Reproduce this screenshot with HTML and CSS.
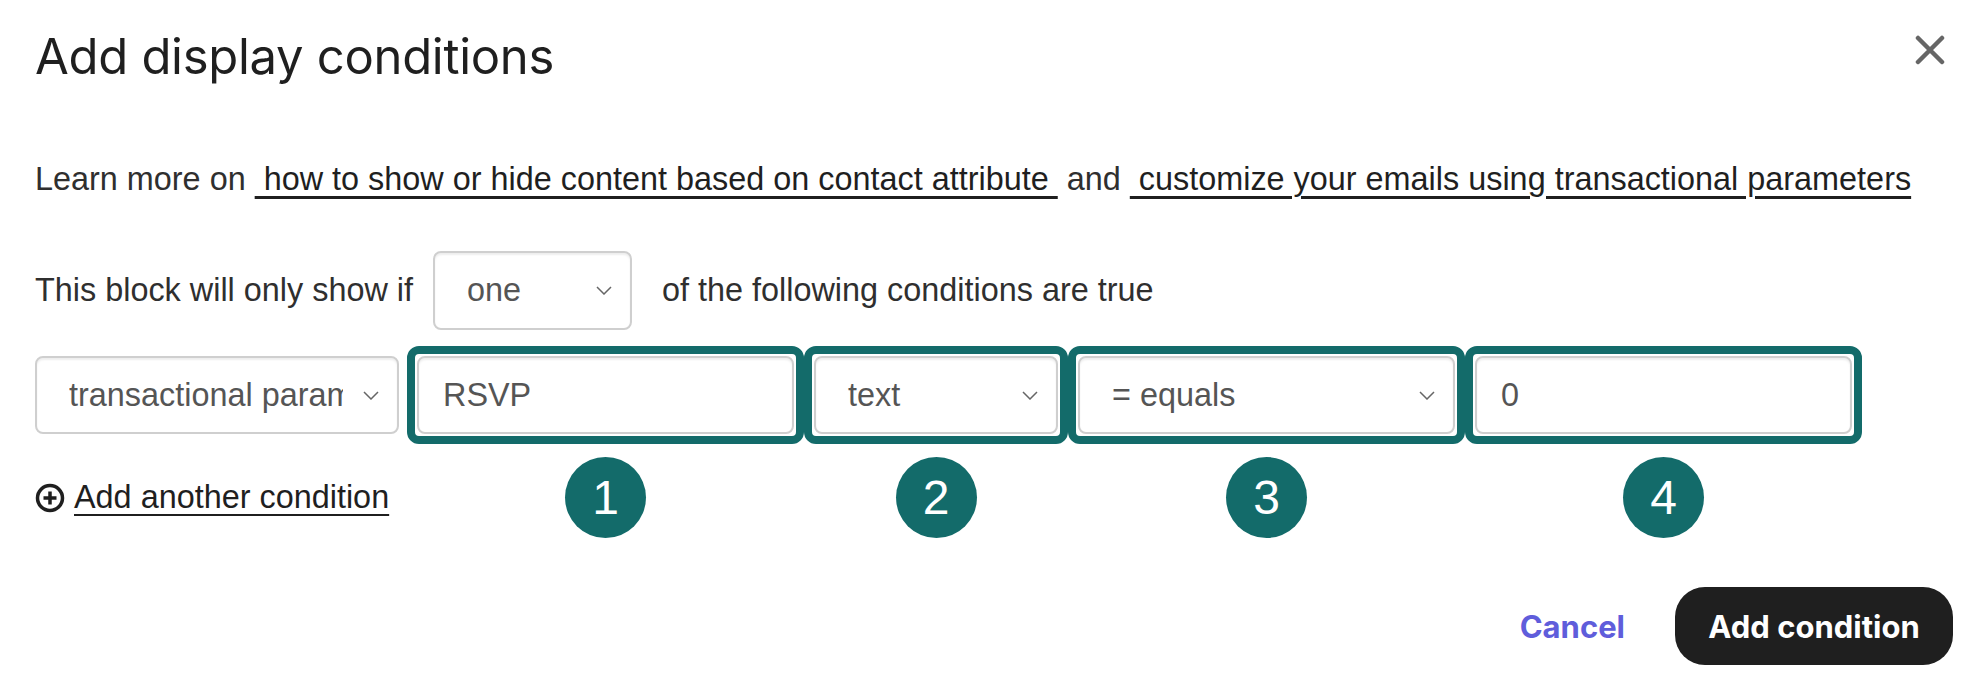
FILE: index.html
```html
<!DOCTYPE html>
<html lang="en">
<head>
<meta charset="utf-8">
<title>Add display conditions</title>
<link rel="stylesheet" href="styles.css">
</head>
<body>
<div class="dialog">
  <header class="head">
    <h1 class="title">Add display conditions</h1>
    <button class="close" aria-label="Close">
      <svg viewBox="0 0 30 30" width="30" height="30"><path d="M3 3L27 27M27 3L3 27" stroke="#666" stroke-width="4.5" stroke-linecap="round" fill="none"/></svg>
    </button>
  </header>

  <p class="learn">Learn more on <a class="link">&nbsp;how to show or hide content based on contact attribute&nbsp;</a> and <a class="link">&nbsp;customize your emails using transactional parameters</a></p>

  <div class="match">
    <span>This block will only show if</span>
    <div class="field select one"><span class="val">one</span><svg class="chev" viewBox="0 0 16 9" width="16" height="9"><polyline points="1,1 8,8 15,1" fill="none" stroke="#666" stroke-width="1.5"/></svg></div>
    <span>of the following conditions are true</span>
  </div>

  <div class="cond">
    <div class="field select attr"><span class="val clip">transactional parameter</span><svg class="chev" viewBox="0 0 16 9" width="16" height="9"><polyline points="1,1 8,8 15,1" fill="none" stroke="#666" stroke-width="1.5"/></svg></div>
    <div class="mark"><div class="field input">RSVP</div></div>
    <div class="mark"><div class="field select"><span class="val">text</span><svg class="chev" viewBox="0 0 16 9" width="16" height="9"><polyline points="1,1 8,8 15,1" fill="none" stroke="#666" stroke-width="1.5"/></svg></div></div>
    <div class="mark"><div class="field select"><span class="val">= equals</span><svg class="chev" viewBox="0 0 16 9" width="16" height="9"><polyline points="1,1 8,8 15,1" fill="none" stroke="#666" stroke-width="1.5"/></svg></div></div>
    <div class="mark"><div class="field input">0</div></div>

    <a class="add">
      <svg viewBox="0 0 30 30" width="30" height="30"><circle cx="15" cy="15" r="12.5" fill="none" stroke="#1f1f1f" stroke-width="3.5"/><path d="M15 8.5V21.5M8.5 15H21.5" stroke="#1f1f1f" stroke-width="3.5"/></svg>
      <span class="add-text">Add another condition</span>
    </a>
    <span class="badge">1</span>
    <span class="badge">2</span>
    <span class="badge">3</span>
    <span class="badge">4</span>
  </div>

  <footer class="foot">
    <a class="cancel">Cancel</a>
    <button class="primary">Add condition</button>
  </footer>
</div>
</body>
</html>
```

FILE: styles.css
```css
html, body {
  margin: 0;
  padding: 0;
  background: #fff;
}

body {
  font-family: "Liberation Sans", Arial, sans-serif;
  font-size: 32.4px;
  color: #2f2f2f;
}

.dialog {
  width: 1980px;
  height: 690px;
  box-sizing: border-box;
  padding: 0 27px 0 35px;
}

.head {
  height: 112px;
  display: flex;
  align-items: center;
  justify-content: space-between;
}

.title {
  margin: 0;
  font-family: Inter, "Liberation Sans", sans-serif;
  font-weight: 400;
  font-size: 49px;
  color: #1f1f1f;
  letter-spacing: -0.3px;
}

.close {
  border: 0;
  background: none;
  padding: 0;
  margin: 0 8px 12px 0;
  width: 30px;
  height: 30px;
  display: flex;
}

.learn {
  margin: 43px 0 0;
  line-height: 48px;
}

.link {
  color: #1f1f1f;
  text-decoration: underline;
  text-decoration-thickness: 3px;
  text-underline-offset: 6px;
}

.match {
  margin-top: 48px;
  display: flex;
  align-items: center;
  gap: 20px;
}

.field {
  box-sizing: border-box;
  height: 78px;
  border: 2px solid #cfcfcf;
  border-radius: 8px;
  background: #fff;
  box-shadow: inset 0 2px 2px rgba(0, 0, 0, 0.07);
  display: flex;
  align-items: center;
  color: #555;
  font-size: 32.4px;
}

.select {
  padding: 0 18px 0 32px;
  justify-content: space-between;
}

.input {
  padding: 0 24px;
}

.one {
  width: 199px;
  height: 79px;
  margin-right: 10px;
}

.chev {
  flex: none;
}

.cond {
  margin-top: 16px;
  display: grid;
  grid-template-columns: 372px 397px 264px 397px 397px;
  grid-template-rows: 98px 81px;
  row-gap: 13px;
  align-items: center;
}

.attr {
  width: 364px;
}

.clip {
  width: 274px;
  overflow: hidden;
  white-space: nowrap;
}

.mark {
  box-sizing: border-box;
  height: 98px;
  border: 8px solid #136b6a;
  border-radius: 12px;
  padding: 2px;
}

.mark .field {
  height: 78px;
}

.add {
  display: flex;
  align-items: center;
  gap: 9px;
  color: #1f1f1f;
}

.add-text {
  text-decoration: underline;
  text-decoration-thickness: 2px;
  text-underline-offset: 6px;
}

.badge {
  justify-self: center;
  width: 81px;
  height: 81px;
  border-radius: 50%;
  background: #136b6a;
  color: #fff;
  font-size: 48px;
  display: flex;
  align-items: center;
  justify-content: center;
}

.foot {
  margin-top: 49px;
  display: flex;
  justify-content: flex-end;
  align-items: center;
  gap: 50px;
}

.cancel {
  font-family: Inter, "Liberation Sans", sans-serif;
  font-weight: 700;
  font-size: 31px;
  color: #5f5ddb;
}

.primary {
  width: 278px;
  height: 78px;
  border: 0;
  border-radius: 30px;
  background: #1f1f1f;
  color: #fff;
  font-family: Inter, "Liberation Sans", sans-serif;
  font-weight: 700;
  font-size: 31px;
}
```
